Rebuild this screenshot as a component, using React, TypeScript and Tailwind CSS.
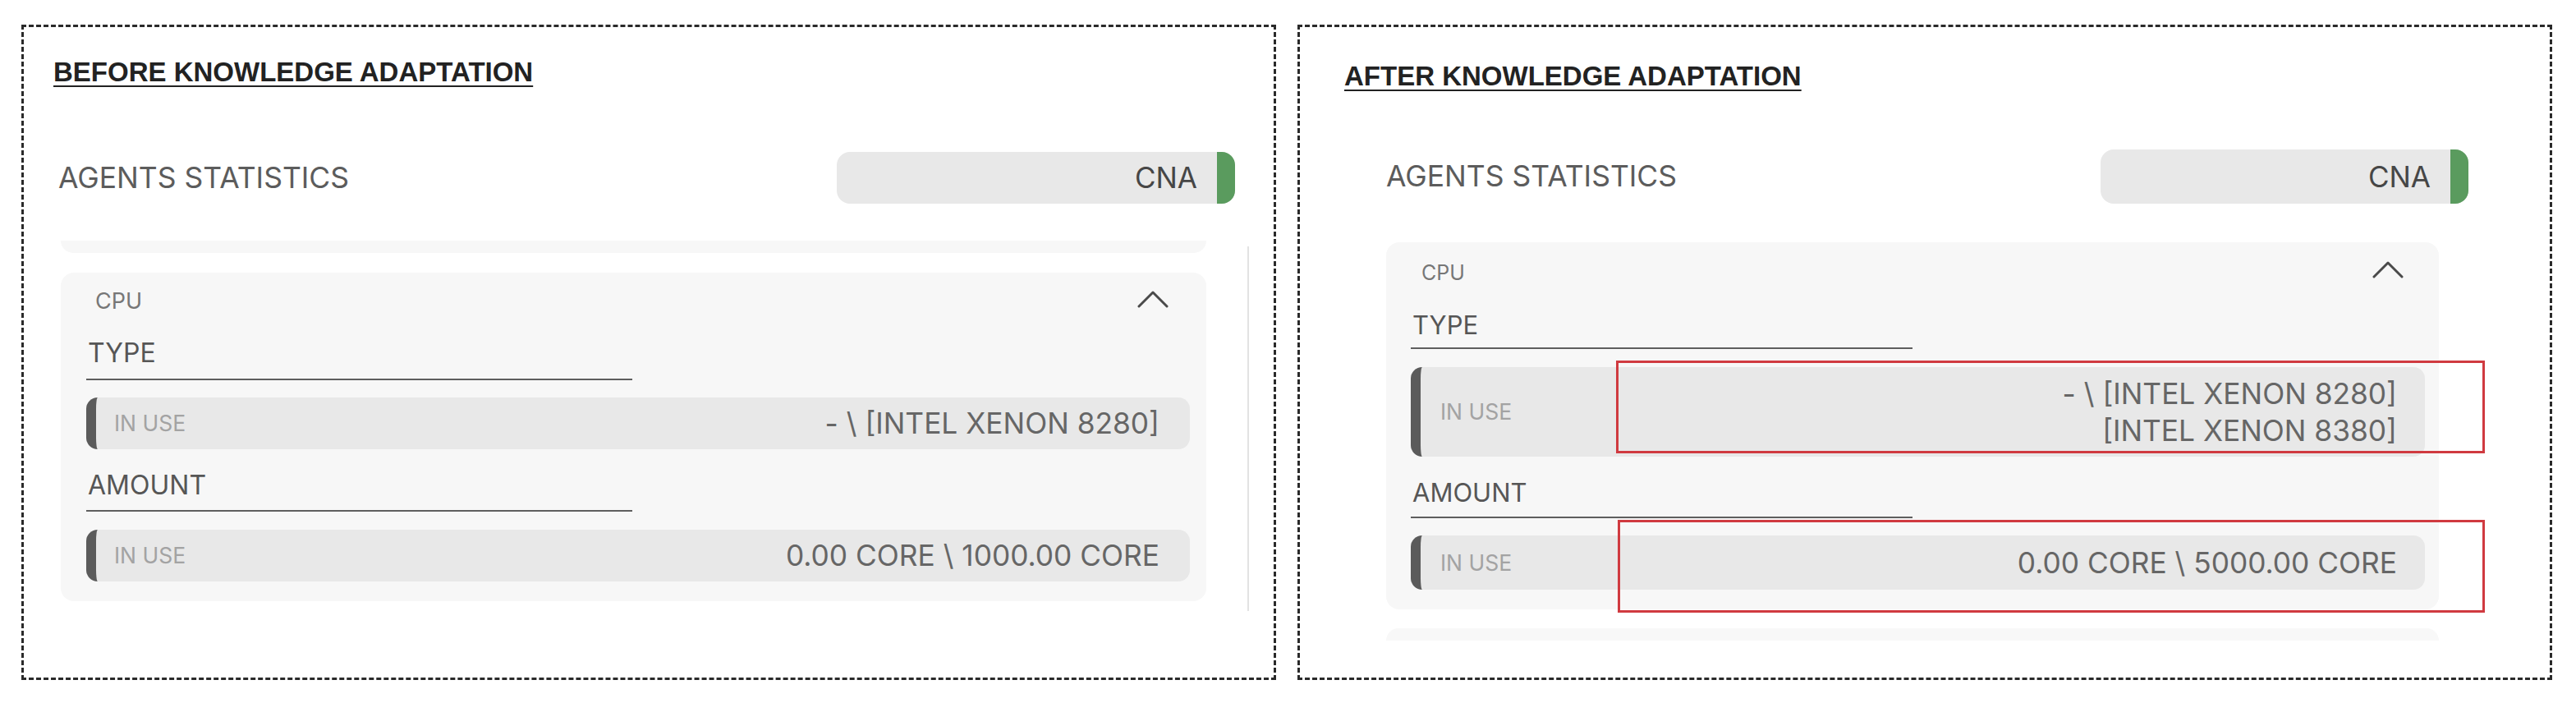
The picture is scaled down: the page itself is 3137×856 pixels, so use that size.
import type { ReactNode } from 'react'

function Chevron() {
  return (
    <svg width="38" height="22" viewBox="0 0 38 22" fill="none" stroke="#4a4a4a" strokeWidth="3" strokeLinecap="round" strokeLinejoin="round">
      <polyline points="2,20 19,3 36,20" />
    </svg>
  )
}

function CnaPill({ className }: { className: string }) {
  return (
    <div className={`flex items-stretch overflow-hidden rounded-[16px] bg-[#e8e8e8] ${className}`}>
      <span className="flex flex-1 items-center justify-end pr-[24px] text-[35px] leading-none text-[#464646]">CNA</span>
      <span className="w-[22px] bg-[#5a9b5e]" />
    </div>
  )
}

function UsageRow({ children, className }: { children: ReactNode; className: string }) {
  return (
    <div className={`flex items-center justify-between rounded-[14px] border-l-[12px] border-[#5b5b5b] bg-[#e8e8e8] ${className}`}>
      <span className="text-[26.5px] leading-none text-[#a3a3a3]">IN USE</span>
      <div className="text-right text-[35.3px] leading-[45px] text-[#666]">{children}</div>
    </div>
  )
}

function Heading({ children, className }: { children: ReactNode; className: string }) {
  return (
    <h2
      className={`font-['Liberation_Sans',Arial,sans-serif] text-[33px] leading-none font-bold text-[#222] underline decoration-2 underline-offset-[5px] ${className}`}
    >
      {children}
    </h2>
  )
}

function BeforePanel() {
  return (
    <section className="h-[798px] w-[1528px] border-[3px] border-dashed border-[#2a2a2a]">
      <Heading className="mt-[38px] ml-[36px]">BEFORE KNOWLEDGE ADAPTATION</Heading>

      <div className="mt-[81px] mr-[47px] ml-[42px] flex h-[63px] items-center justify-between">
        <span className="text-[35.5px] leading-none text-[#5c5c5c]">AGENTS STATISTICS</span>
        <CnaPill className="h-[63px] w-[485px]" />
      </div>

      <div className="mt-[45px] ml-[45px] flex items-start">
        <div className="w-[1395px]">
          <div className="h-[15px] rounded-b-[16px] bg-[#f7f7f7]" />
          <div className="mt-[24px] h-[400px] rounded-[16px] bg-[#f7f7f7] pr-[20px] pl-[31px]">
            <div className="flex items-start justify-between pt-[21px] pr-[26px] pl-[11px]">
              <span className="text-[27px] leading-none text-[#777]">CPU</span>
              <Chevron />
            </div>
            <div className="mt-[34px] w-[665px] border-b-2 border-[#5e5e5e] pb-[15px] pl-[2px] text-[32px] leading-none text-[#565656]">
              TYPE
            </div>
            <UsageRow className="mt-[21px] h-[63px] pr-[37px] pl-[22px]">- \ [INTEL XENON 8280]</UsageRow>
            <div className="mt-[28px] w-[665px] border-b-2 border-[#5e5e5e] pb-[14px] pl-[2px] text-[32px] leading-none text-[#565656]">
              AMOUNT
            </div>
            <UsageRow className="mt-[22px] h-[63px] pr-[37px] pl-[22px]">0.00 CORE \ 1000.00 CORE</UsageRow>
          </div>
        </div>
        <div className="mt-[7px] ml-[50px] h-[444px] w-[2px] bg-[#e2e2e2]" />
      </div>
    </section>
  )
}

function AfterPanel() {
  return (
    <section className="relative h-[798px] w-[1528px] border-[3px] border-dashed border-[#2a2a2a]">
      <Heading className="mt-[43px] ml-[54px]">AFTER KNOWLEDGE ADAPTATION</Heading>

      <div className="mt-[73px] mr-[99px] ml-[105px] flex h-[66px] items-center justify-between">
        <span className="text-[35.5px] leading-none text-[#5c5c5c]">AGENTS STATISTICS</span>
        <CnaPill className="h-[66px] w-[448px]" />
      </div>

      <div className="mt-[47px] ml-[105px] w-[1282px]">
        <div className="h-[447px] rounded-[16px] bg-[#f7f7f7] pr-[17px] pl-[30px]">
          <div className="flex items-start justify-between pt-[22px] pr-[26px] pl-[13px]">
            <span className="mt-[3px] text-[25px] leading-none text-[#777]">CPU</span>
            <Chevron />
          </div>
          <div className="mt-[35px] w-[611px] border-b-2 border-[#5e5e5e] pb-[12px] pl-[2px] text-[31px] leading-none text-[#565656]">
            TYPE
          </div>
          <UsageRow className="mt-[22px] h-[109px] pr-[34px] pl-[24px]">
            <div>- \ [INTEL XENON 8280]</div>
            <div>[INTEL XENON 8380]</div>
          </UsageRow>
          <div className="mt-[28px] w-[611px] border-b-2 border-[#5e5e5e] pb-[14px] pl-[2px] text-[31px] leading-none text-[#565656]">
            AMOUNT
          </div>
          <UsageRow className="mt-[21px] h-[66px] pr-[34px] pl-[24px]">0.00 CORE \ 5000.00 CORE</UsageRow>
        </div>
        <div className="mt-[23px] h-[15px] rounded-t-[16px] bg-[#f8f8f8]" />
      </div>

      {/* highlight boxes drawn over the changed values */}
      <div className="absolute top-[406px] left-[385px] h-[113px] w-[1058px] border-[3px] border-[#d03a40]" />
      <div className="absolute top-[600px] left-[387px] h-[113px] w-[1056px] border-[3px] border-[#d03a40]" />
    </section>
  )
}

export default function App() {
  return (
    <div className="flex h-[856px] w-[3137px] gap-[26px] bg-white pt-[30px] pl-[26px] font-['Inter',sans-serif]">
      <BeforePanel />
      <AfterPanel />
    </div>
  )
}
